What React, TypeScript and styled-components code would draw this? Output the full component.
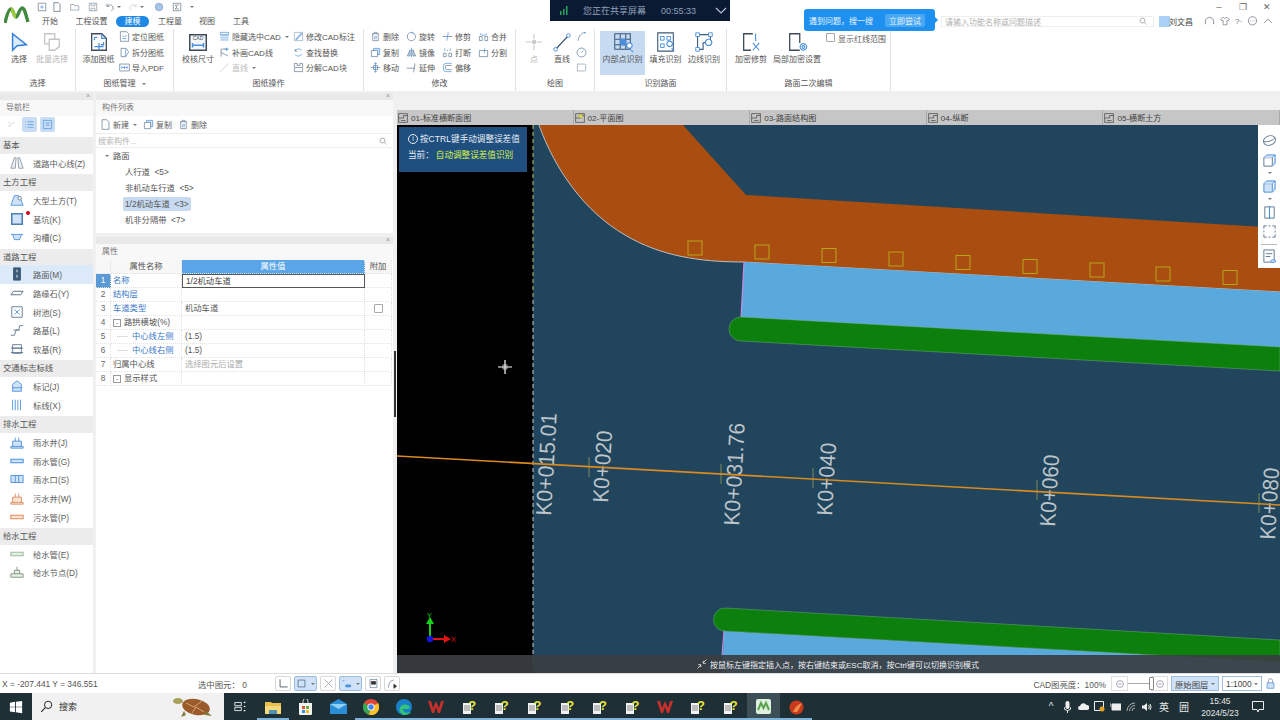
import React from "react";
import styled, { createGlobalStyle } from "styled-components";

const Global = createGlobalStyle`
  html, body { margin: 0; padding: 0; background: #fff; overflow: hidden; }
  * { box-sizing: border-box; }
  #root { width: 1280px; height: 720px; }
`;

const FONT = `"Liberation Sans", "Noto Sans CJK SC", sans-serif`;

/* ---------- icon drawings ---------- */
const D = "#5d7690";
const B = "#4a8fdc";
const L = "#cfe2f7";

const P = ({ d, c = D, w = 1, f = "none" }: { d: string; c?: string; w?: number; f?: string }) => (
  <path d={d} stroke={c} strokeWidth={w} fill={f} />
);

const icons: Record<string, React.ReactNode> = {
  cursor: <P d="M5 3v18l5-5 10-1z" c="#2f7fd6" w={1.6} f="#dcebfb" />,
  batch: <><P d="M4 3h11v11H4z" c="#c4c4c4" w={1.4} /><P d="M9 9h11v8l-5 4H9z" c="#c4c4c4" w={1.4} f="#fff" /></>,
  addDraw: <><P d="M4 3h11l5 5v13H4z" c="#3c4a5a" w={1.4} f="#fff" /><P d="M15 3v5h5M7 7h3M7 7v3M17 12v3h-3M7 17h10M12 13v8" c={B} w={1.4} /></>,
  check: <><P d="M3 4h18v17H3z" c="#3c4a5a" w={1.6} f="#f4f7fb" /><P d="M6 13v5M18 13v5M6 15.5h12" c={B} w={1.6} /><text x="12" y="10" fontSize="5.5" textAnchor="middle" fill="#3c4a5a" fontFamily="Liberation Sans">CAD</text></>,
  inner: <><P d="M3 3h17v17H3zM3 9h17M3 15h17M9 3v17M15 3v17" c="#3c5a78" w={1.1} /><P d="M9 9h6v6H9z" c={B} f={B} /><P d="M19 19a3 3 0 1 0-.01 0M21 21l2 2" c={B} w={1.3} f="#fff" /></>,
  fill: <><P d="M3 2h17v20H3z" c="#3c5a78" w={1.2} /><P d="M6 6h4v4H6zM6 14h4v4H6zM13 6h4v4h-4z" c={B} /><P d="M16 17a3 3 0 1 0-.01 0M18 19l3 3" c={B} w={1.3} f="#fff" /></>,
  edge: <><P d="M5 4h14v7l-8 2v7H5z" c="#3c5a78" w={1.2} /><P d="M3 2h4v4H3zM17 2h4v4h-4zM3 18h4v4H3z" c={B} f="#fff" /><P d="M17 16a3.5 3.5 0 1 0-.01 0" c={B} w={1.3} f="#fff" /></>,
  clip: <><P d="M14 3H4v18h8" c="#3c4a5a" w={1.4} /><P d="M17 3v8M14 13l7 8M21 13l-7 8" c={B} w={1.2} /></>,
  local: <><P d="M15 21H4V3h11v10" c="#3c4a5a" w={1.4} /><P d="M19 21a3.6 3.6 0 1 0-.01 0M19 19a1.5 1.5 0 1 0-.01 0" c={B} w={1.2} /></>,
  point: <><P d="M12 3v6M12 15v6M3 12h6M15 12h6" c="#c9c9c9" w={1.2} /><circle cx="12" cy="12" r="2.4" fill="#c9c9c9" /></>,
  line: <><P d="M5 20L19 5" c="#2e4a66" w={1.4} /><circle cx="5" cy="20" r="2" fill="#fff" stroke={B} /><circle cx="19" cy="5" r="2" fill="#fff" stroke={B} /></>,
  arc: <><P d="M3 14C4 7 8 3 13 2" /><circle cx="13" cy="2.6" r="1.2" fill={B} /></>,
  circ: <><circle cx="8" cy="8" r="6.5" stroke={D} fill="none" /><P d="M8 8l3-3" c={B} /></>,
  rectI: <P d="M2 3h11l1 1v8l-1 1H2z" c="#8b9aab" />,
  locate: <><P d="M2 1h9l3 3v11H2z" /><P d="M5 6l3 3 3-3M5 11h6" c={B} /></>,
  split: <><P d="M3 2h7l4 5-4 7H3z" /><P d="M10 2l-1 12" c={B} /></>,
  pdf: <><P d="M1 3h14v10H1z" /><P d="M4 6v4M8 6v4M12 6v4M4 8h8" c={B} /></>,
  hide: <P d="M2 2h12v3H2zM2 7h12M2 10h12M2 13h12" c={B} />,
  fix: <><P d="M3 3h10M3 3v11M3 8l10 5" /><P d="M11 1v5M8 3h6" c={B} /></>,
  slash: <P d="M2 14L14 2" c="#c0c0c0" />,
  edit: <><P d="M2 2h12v12H2z" c="#8fa8c2" /><P d="M4 12l8-9 1 1-8 9z" c={B} f={L} /></>,
  find: <><P d="M13 5A6 6 0 0 0 3 6M3 11a6 6 0 0 0 10-1" c={B} /><P d="M3 3v3h3" c={D} /></>,
  explode: <P d="M2 8V2h4v3h4V2h4v6H2zM2 9v5h12V9" />,
  del: <><P d="M3 4h10M6 4V2h4v2M4 4v10h8V4" /><P d="M7 7v5M9 7v5" c={B} /></>,
  copy: <><P d="M5 2h9v9H5z" c={B} f={L} /><P d="M2 5h9v9H2z" f="#fff" /></>,
  move: <><P d="M8 1v14M1 8h14M8 1L6 3M8 1l2 2M8 15l-2-2M8 15l2-2" c={B} /><P d="M5 5h6v6H5z" /></>,
  rotate: <><P d="M13 5a6 6 0 1 1-3-2.5" /><P d="M10 1v3h3" c={B} /></>,
  mirror: <><P d="M8 1v14" c={B} /><P d="M6 4L2 13h4zM10 4l4 9h-4z" f={L} /></>,
  extend: <P d="M1 9h8M13 2l-2 13M9 9h4" c={D} />,
  trim: <><P d="M1 8h14" /><P d="M9 2L7 14" c={B} /></>,
  brk: <><P d="M2 14V9h4v5zM10 14V9h4v5z" /><P d="M4 2v4M12 2v4M8 4v2" c={B} /></>,
  offset: <><P d="M14 2H6a4 4 0 0 0-4 4v4a4 4 0 0 0 4 4h8" c={B} /><P d="M14 5H7a2 2 0 0 0-2 2v2a2 2 0 0 0 2 2h7" /></>,
  merge: <><P d="M2 14V8h4v6zM10 14V8h4v6z" /><P d="M4 3v3M12 3v3M5 6h6" c={B} /></>,
  divide: <><P d="M2 5h12v9H2z" /><P d="M10 2l-1 7" c={B} /></>,
  newDoc: <P d="M3 1h7l3 3v11H3z" />,
  listI: <><P d="M5 4h9M5 8h9M5 12h9" c={B} /><P d="M2 4h1M2 8h1M2 12h1" c={B} /></>,
  formI: <><P d="M2 2h12v12H2z" c={B} /><P d="M5 6h6M5 9h6" c={B} /></>,
  treeI: <P d="M3 12l4-4M8 7l1-1M11 5h2M3 5h2" c="#888" />,
  road: <><P d="M5 2L1 14h5l1-12zM11 2l4 12h-5L9 2z" c="#8a97a5" f="#eef1f4" /></>,
  earth: <><P d="M1 14L5 3h5l2 4 3 7z" c={B} f={L} /><circle cx="11" cy="6" r="2" fill="#fff" stroke={D} /></>,
  pit: <P d="M2 2h12v12H2z" c="#4d7fb8" w={1.8} f={L} />,
  ditch: <P d="M1 5h14M3 5l2 6h6l2-6" c={B} f={L} />,
  pave: <><P d="M4 1h8v14H4z" c="#3c5a78" f="#3c5a78" /><P d="M8 3v3M8 9v3" c="#fff" /></>,
  curb: <P d="M4 6h11l-3 4H1z" c="#4b6580" f="#fff" />,
  tree: <><P d="M2 2h12v12H2z" /><P d="M5 5l6 6M11 5l-6 6" c={B} /></>,
  sub: <P d="M1 14h4l2-6h3l1-5h4M4 8h7" c={D} />,
  soft: <P d="M3 3h10v4H3zM1 7h14M3 7v6h10V7M1 12h14" />,
  mark: <><P d="M3 14V6l5-4 5 4v8z" c={B} f={L} /><P d="M3 10h10" c={B} /></>,
  stripe: <P d="M3 2v12M6 2v12M9 2v12M12 2v12" c={B} />,
  well: <P d="M1 13h14v2H1zM3 13V7h10v6M6 7V3M10 7V3" c={B} f={L} />,
  pipe: <P d="M1 6h14v4H1z" c={B} w={1.2} f={L} />,
  inlet: <P d="M1 4h14v8H1zM6 4v8M10 4v8" c={B} f={L} />,
  sWell: <P d="M1 13h14v2H1zM3 13V7h10v6M6 7V3M10 7V3" c="#d98a5e" f="#fbe3d4" />,
  sPipe: <P d="M1 6h14v4H1z" c="#d98a5e" w={1.2} f="#fbe3d4" />,
  wPipe: <P d="M1 6h14v4H1z" c="#9dbb9d" w={1.2} f="#e2efe2" />,
  wNode: <P d="M1 10h14v4H1zM5 10V6h6v4M8 6V2" c="#7d8f7d" f="#e2efe2" />,
  newQ: <P d="M3 1h7l3 3v11H3z" c="#456" />,
  openQ: <P d="M1 13V4h5l1 2h7v7z" c="#789" />,
  saveQ: <><P d="M2 2h12v12H2z" c="#789" /><P d="M5 2v4h6V2M5 14v-4h6v4" c="#789" /></>,
  addQ: <><P d="M2 2h12v12H2z" c="#567" /><P d="M8 5v6M5 8h6" c={B} /></>,
  undoQ: <P d="M3 3v4h4M3 7c3-4 10-3 10 3 0 2-1 3-3 4" c="#567" />,
  redoQ: <P d="M13 3v4H9M13 7C10 3 3 4 3 10c0 2 1 3 3 4" c="#c8c8c8" />,
  globeQ: <circle cx="8" cy="8" r="6" fill="#a9c5e8" stroke="#6d93c4" />,
  sigmaQ: <><P d="M2 2h12v12H2z" c="#567" /><P d="M11 5H5l3 3-3 3h6" c="#567" /></>,
  headset: <P d="M2 10V8a6 6 0 0 1 12 0v2M2 9v3M14 9v3" c="#667" />,
  shirt: <P d="M5 2L1 5l2 3 2-1v7h6V7l2 1 2-3-4-3-3 2z" c="#667" />,
  chat: <><circle cx="8" cy="7" r="6" stroke="#667" fill="none" /><P d="M5 7h1M8 7h1M11 7h1" c="#667" /></>,
  chevUp: <P d="M2 11l6-6 6 6" c="#667" w={1.2} />,
  sphere: <><ellipse cx="8" cy="8" rx="6.5" ry="5" stroke={D} fill="none" transform="rotate(-20 8 8)" /><P d="M2 9c3 1 8 0 12-4" /></>,
  cube: <><P d="M2 5h9v9H2z" /><P d="M2 5l3-3h9l-3 3M14 2v9l-3 3" c={B} f={L} /></>,
  cubeF: <><P d="M2 5h9v9H2z" c={B} f={L} /><P d="M2 5l3-3h9l-3 3M14 2v9l-3 3" c={B} f={L} /></>,
  clipV: <><P d="M3 2h10v12H3z" c={D} /><P d="M8 1v14" c={B} w={1.2} /></>,
  frame: <P d="M2 5V2h3M11 2h3v3M14 11v3h-3M5 14H2v-3M7 2h2M7 14h2M2 7v2M14 7v2" />,
  doc: <><P d="M2 1h11v13H2z" /><P d="M4 5h7M4 8h5" c={D} /><P d="M9 13c1-2 4-2 6 0-2 2-5 2-6 0z" c={B} f={L} /></>,
  axes: <P d="M3 2v11h11" c="#3c4a5a" w={1.2} />,
  boxI: <P d="M3 3h10v10H3z" c="#3c5a78" f={L} />,
  crossI: <P d="M2 2l12 12M14 2L2 14" c="#8895a5" />,
  dotI: <P d="M2 4h3M7 10h7v3H7z" c={B} f={B} />,
  docI: <><P d="M3 2h10v12H3z" /><P d="M5 5h6v4H5z" c="#333" f="#333" /></>,
  curveI: <><P d="M2 14c1-8 3-10 8-11" /><P d="M10 9l4 3-4 3z" c="#333" f="#333" /></>,
  minusI: <><circle cx="8" cy="8" r="5.5" stroke="#778" fill="none" /><P d="M5 8h6" c="#778" /></>,
  lock: <><P d="M3 7h10v8H3z" c={B} f={L} /><P d="M5 7V4a3 3 0 0 1 6 0v3" c="#778" /></>,
  sheet: <><P d="M1 1h14v14H1z" c="#333" /><P d="M1 8h8V4h6M5 12h7" c="#333" /></>,
  sheetY: <><P d="M1 1h14v14H1z" c="#333" /><P d="M1 8h8V4h6" c="#333" /><circle cx="9" cy="5" r="3" fill="#e8de5a" stroke="#a09a20" /></>,
  win: <P d="M1 3l6-1v5.6H1zM8 2l7-1v6.6H8zM1 8.4h6V14l-6-1zM8 8.4h7V15l-7-1z" c="none" f="#fff" />,
  mag: <><circle cx="10" cy="6" r="4.5" stroke="#222" fill="none" strokeWidth="1.2" /><P d="M6.5 9.5L1.5 14.5" c="#222" w={1.3} /></>,
  task: <><P d="M1 3h8v4H1zM1 9h8v4H1z" c="#fff" /><P d="M12 3h2M12 8h2M12 13h2" c="#fff" w={1.4} /></>,
};

const Svg = styled.svg<{ $s: number }>`
  width: ${(p) => p.$s}px;
  height: ${(p) => p.$s}px;
  flex: none;
  display: block;
`;

const Icon = ({ n, s = 12, box = 16 }: { n: string; s?: number; box?: number }) => (
  <Svg $s={s} viewBox={`0 0 ${box} ${box}`}>{icons[n]}</Svg>
);

/* ---------- shell ---------- */
const Root = styled.div`
  width: 1280px;
  height: 720px;
  position: relative;
  overflow: hidden;
  background: #fff;
  font-family: ${FONT};
  font-size: 8px;
  color: #5c5c5c;
  display: flex;
  flex-direction: column;
`;

const TitleRow = styled.div`
  height: 13px;
  display: flex;
  align-items: center;
  padding-left: 36px;
  flex: none;
`;
const QatItem = styled.span<{ $w: number }>`
  width: ${(p) => p.$w}px;
  display: flex;
  justify-content: center;
  align-items: center;
`;
const Caret = styled.span`
  width: 0;
  height: 0;
  border-left: 2px solid transparent;
  border-right: 2px solid transparent;
  border-top: 2.5px solid #777;
  margin-left: 2px;
  flex: none;
`;
const WinBtns = styled.div`
  margin-left: auto;
  display: flex;
  padding-right: 1px;
  color: #666;
  font-size: 9px;
`;
const WinBtn = styled.span`
  width: 24px;
  text-align: center;
  line-height: 12px;
`;

const LogoWrap = styled.div`
  position: absolute;
  left: 4px;
  top: 4px;
`;

const TabRow = styled.div`
  height: 16px;
  display: flex;
  align-items: center;
  padding-left: 33px;
  flex: none;
`;
const MenuTab = styled.span<{ $w: number; $on?: boolean }>`
  width: ${(p) => p.$w}px;
  height: 11px;
  line-height: 11px;
  text-align: center;
  font-size: 8px;
  color: ${(p) => (p.$on ? "#fff" : "#555")};
  background: ${(p) => (p.$on ? "#1e88e5" : "transparent")};
  border-radius: 6px;
`;
const SearchBox = styled.div`
  margin-left: 682px;
  width: 213px;
  height: 11px;
  border: 1px solid #eeeeee;
  display: flex;
  align-items: center;
  justify-content: space-between;
  padding: 0 6px 0 3px;
  color: #b0b0b0;
  font-size: 8px;
`;
const UserBlock = styled.div`
  display: flex;
  align-items: center;
  margin-left: 5px;
  color: #444;
`;
const Avatar = styled.span`
  width: 11px;
  height: 11px;
  background: #a9d0f5;
  margin-right: -1px;
`;
const HelpTools = styled.div`
  display: flex;
  align-items: center;
  gap: 5px;
  margin-left: 11px;
  color: #667;
`;

const Ribbon = styled.div`
  height: 62px;
  display: flex;
  flex: none;
  background: #fff;
`;
const Group = styled.div<{ $w: number }>`
  width: ${(p) => p.$w}px;
  flex: none;
  display: flex;
  flex-direction: column;
  border-right: 1px solid #e2e2e2;
  height: 62px;
`;
const GroupBody = styled.div<{ $pl?: number }>`
  height: 49px;
  display: flex;
  padding-left: ${(p) => p.$pl ?? 0}px;
`;
const GroupLabel = styled.div`
  height: 14px;
  line-height: 14px;
  text-align: center;
  font-size: 8px;
  color: #555;
  display: flex;
  align-items: center;
  justify-content: center;
  gap: 4px;
`;
const BigBtn = styled.div<{ $w: number; $on?: boolean; $off?: boolean }>`
  width: ${(p) => p.$w}px;
  height: 44px;
  margin-top: 2px;
  flex: none;
  display: flex;
  flex-direction: column;
  align-items: center;
  background: ${(p) => (p.$on ? "#c6daf2" : "transparent")};
  color: ${(p) => (p.$off ? "#b8b8b8" : "#555")};
  white-space: nowrap;
`;
const BigLabel = styled.span`
  margin-top: 2px;
  line-height: 10px;
`;
const SmallCol = styled.div<{ $w: number }>`
  width: ${(p) => p.$w}px;
  flex: none;
  display: flex;
  flex-direction: column;
`;
const SmallBtn = styled.div<{ $off?: boolean }>`
  height: 15.5px;
  display: flex;
  align-items: center;
  gap: 2px;
  white-space: nowrap;
  color: ${(p) => (p.$off ? "#bbb" : "#555")};
`;
const CheckRow = styled.label`
  display: flex;
  align-items: flex-start;
  gap: 3px;
  margin-left: 5px;
  margin-top: 4px;
  white-space: nowrap;
`;
const Check = styled.span`
  width: 9px;
  height: 9px;
  border: 1px solid #a8a8a8;
  border-radius: 1px;
  background: #fff;
  flex: none;
  display: block;
`;

const Body = styled.div`
  height: 582px;
  flex: none;
  display: flex;
  background: #f0f0f0;
  padding-top: 2px;
`;

const Panel = styled.section`
  background: #fff;
  display: flex;
  flex-direction: column;
`;
const NavPanel = styled(Panel)`
  width: 93px;
  flex: none;
  margin-right: 3px;
`;
const Column = styled.div`
  width: 297px;
  flex: none;
  display: flex;
  flex-direction: column;
  gap: 4px;
`;
const Band = styled.div`
  height: 7px;
  background: #e9e9e9;
  color: #999;
  font-size: 7px;
  line-height: 6px;
  text-align: right;
  padding-right: 3px;
  flex: none;
`;
const PanelTitle = styled.div`
  height: 16px;
  line-height: 15px;
  background: #f8f8f8;
  padding-left: 6px;
  color: #777;
  flex: none;
`;
const NavTools = styled.div`
  height: 21px;
  display: flex;
  align-items: center;
  gap: 3px;
  padding: 0 0 4px 4px;
  flex: none;
`;
const ToggleBtn = styled.span<{ $on?: boolean }>`
  width: 15px;
  height: 15px;
  background: ${(p) => (p.$on ? "#c9def5" : "transparent")};
  border-radius: 2px;
  display: flex;
  align-items: center;
  justify-content: center;
`;
const NavHead = styled.div`
  height: 16.5px;
  line-height: 16px;
  background: #ececec;
  padding-left: 3px;
  font-size: 8.4px;
  color: #555;
`;
const NavList = styled.div`
  margin-bottom: 2px;
`;
const NavRow = styled.div<{ $on?: boolean }>`
  height: 18.67px;
  display: flex;
  align-items: center;
  gap: 9px;
  padding-left: 10px;
  background: ${(p) => (p.$on ? "#dbe9f8" : "transparent")};
  font-size: 8.3px;
  white-space: nowrap;
  position: relative;
`;
const RedDot = styled.span`
  position: absolute;
  left: 26px;
  top: 2px;
  width: 4px;
  height: 4px;
  border-radius: 50%;
  background: #d00018;
`;

const CompPanel = styled(Panel)`
  height: 140px;
  flex: none;
`;
const CompTools = styled.div`
  height: 17px;
  display: flex;
  align-items: center;
  padding-left: 4px;
  gap: 2px;
  flex: none;
`;
const ToolGap = styled.span`
  width: 2px;
`;
const SearchRow = styled.div`
  height: 15px;
  border-top: 1px solid #eee;
  border-bottom: 1px solid #eee;
  color: #b5b5b5;
  display: flex;
  justify-content: space-between;
  align-items: center;
  padding: 0 6px 0 2px;
  flex: none;
`;
const TreeRow = styled.div<{ $lv: number }>`
  height: 16px;
  display: flex;
  align-items: center;
  padding-left: ${(p) => (p.$lv ? 29 : 9)}px;
  font-size: 8.3px;
  color: #555;
`;
const TreeText = styled.span<{ $on?: boolean }>`
  background: ${(p) => (p.$on ? "#c7daf0" : "transparent")};
  border-radius: 2px;
  padding: 0 ${(p) => (p.$on ? "2px" : "0")};
  margin-left: ${(p) => (p.$on ? "-2px" : "0")};
  line-height: 14px;
  white-space: nowrap;
`;
const TreeCaret = styled(Caret)`
  margin: 0 4px 0 0;
`;
const PropPanel = styled(Panel)`
  flex: 1;
`;
const Table = styled.div`
  display: grid;
  grid-template-columns: 15px 71px 183px 27px;
  grid-auto-rows: 14px;
  flex: none;
  font-size: 8.3px;
  line-height: 13px;
`;
const Cell = styled.div<{ $head?: boolean; $active?: boolean; $c?: string; $num?: boolean; $pl?: number }>`
  border-right: 1px dotted #e2e2e2;
  border-bottom: 1px dotted #e2e2e2;
  padding-left: ${(p) => p.$pl ?? 3}px;
  white-space: nowrap;
  text-align: ${(p) => (p.$head || p.$num ? "center" : "left")};
  color: ${(p) => p.$c ?? "#555"};
  background: ${(p) => (p.$active ? "#5b9bd5" : p.$head ? "#f7f7f7" : "#fff")};
  display: flex;
  align-items: center;
  justify-content: ${(p) => (p.$head || p.$num ? "center" : "flex-start")};
  gap: 3px;
  ${(p) => (p.$head || p.$num ? "padding-left: 0;" : "")}
`;
const HeadValue = styled(Cell)`
  background: #5aa5e8;
  color: #fff;
`;
const EditCell = styled(Cell)`
  border: 1px solid #555;
  color: #444;
`;
const Expand = styled.span`
  width: 8px;
  height: 8px;
  border: 1px solid #999;
  font-size: 7px;
  line-height: 5px;
  text-align: center;
  color: #666;
  flex: none;
`;
const Branch = styled.span`
  width: 11px;
  border-top: 1px solid #ddd;
  margin-right: 1px;
  flex: none;
`;
const CheckCell = styled(Cell)`
  justify-content: center;
  padding-left: 0;
`;

const Splitter = styled.div`
  width: 4px;
  flex: none;
  position: relative;
`;
const SplitThumb = styled.span`
  position: absolute;
  left: 1px;
  top: 258px;
  width: 2px;
  height: 66px;
  background: #333;
`;

const Work = styled.div`
  flex: 1;
  display: flex;
  flex-direction: column;
  min-width: 0;
`;
const Strip = styled.div`
  height: 17px;
  flex: none;
`;
const SheetTabs = styled.div`
  height: 15px;
  background: #c6c6c6;
  display: flex;
  flex: none;
`;
const SheetTab = styled.div`
  flex: 1;
  display: flex;
  align-items: center;
  gap: 3px;
  padding-left: 1px;
  color: #444;
  font-size: 8.1px;
  border-right: 1px solid #aaa;
`;
const Canvas = styled.div`
  flex: 1;
  position: relative;
  background: #000;
  overflow: hidden;
`;
const CadSvg = styled.svg`
  display: block;
  width: 883px;
  height: 548px;
`;
const InfoCard = styled.div`
  position: absolute;
  left: 2px;
  top: 2px;
  width: 128px;
  height: 45px;
  background: #1f4f7f;
  color: #e8eef5;
  padding: 7px 0 0 9px;
  font-size: 8.6px;
  display: flex;
  flex-direction: column;
  gap: 6px;
`;
const InfoLine = styled.div`
  display: flex;
  align-items: center;
  gap: 2px;
  white-space: nowrap;
  line-height: 10px;
`;
const InfoMark = styled.span`
  width: 10px;
  height: 10px;
  border: 1px solid #e8eef5;
  border-radius: 50%;
  font-size: 7px;
  line-height: 8px;
  text-align: center;
  flex: none;
`;
const InfoHot = styled.span`
  color: #d7f24a;
`;
const HintBar = styled.div`
  position: absolute;
  left: 0;
  right: 0;
  bottom: 0;
  height: 18px;
  background: rgba(58, 62, 66, 0.92);
  color: #eef1f4;
  font-size: 8px;
  display: flex;
  align-items: center;
  padding-left: 300px;
  gap: 3px;
  white-space: nowrap;
`;
const ViewTools = styled.div`
  position: absolute;
  right: 0;
  top: 0;
  width: 22px;
  height: 143px;
  background: #fff;
  display: flex;
  flex-direction: column;
  align-items: center;
  padding-top: 8px;
  gap: 4.5px;
`;
const ViewSep = styled.span`
  width: 16px;
  border-top: 1px solid #bbb;
`;

const StatusBar = styled.div`
  height: 20px;
  flex: none;
  display: flex;
  align-items: center;
  background: #fff;
  border-top: 1px solid #ddd;
  padding-left: 2px;
  color: #555;
  font-size: 8.4px;
  white-space: nowrap;
`;
const Coord = styled.span`
  width: 196px;
`;
const Selected = styled.span`
  width: 77px;
`;
const StatusBtn = styled.span<{ $w?: number; $on?: boolean }>`
  width: ${(p) => p.$w ?? 16}px;
  height: 15px;
  border: 1px solid ${(p) => (p.$on ? "#9dbde0" : "#d8d8d8")};
  background: ${(p) => (p.$on ? "#cfe2f7" : "#fff")};
  border-radius: 2px;
  margin-right: 3px;
  display: flex;
  align-items: center;
  justify-content: center;
  gap: 2px;
  flex: none;
`;
const StatusRight = styled.div`
  margin-left: auto;
  display: flex;
  align-items: center;
  padding-right: 4px;
`;
const Bright = styled.span`
  margin-right: 5px;
`;
const SliderTrack = styled.span`
  width: 26px;
  height: 1px;
  background: #aaa;
  margin: 0 -3px 0 -3px;
  position: relative;
`;
const SliderKnob = styled.span`
  position: absolute;
  right: 0;
  top: -6px;
  width: 5px;
  height: 13px;
  border: 1px solid #888;
  background: #fff;
  border-radius: 1px;
`;
const ZoomBtn = styled.span`
  width: 17px;
  height: 15px;
  border: 1px solid #ddd;
  display: flex;
  align-items: center;
  justify-content: center;
  margin-right: 3px;
  flex: none;
`;
const Select = styled.span<{ $w: number; $on?: boolean }>`
  width: ${(p) => p.$w}px;
  height: 15px;
  border: 1px solid #9dbde0;
  background: ${(p) => (p.$on ? "#cfe2f7" : "#fff")};
  display: flex;
  align-items: center;
  justify-content: space-between;
  padding: 0 3px;
  margin-right: 3px;
  color: #444;
  flex: none;
`;

const Taskbar = styled.div`
  height: 27px;
  flex: none;
  background: #1e3036;
  display: flex;
  align-items: stretch;
  color: #fff;
`;
const StartBtn = styled.div`
  width: 32px;
  display: flex;
  align-items: center;
  justify-content: center;
  flex: none;
`;
const TaskSearch = styled.div`
  width: 192px;
  background: #f1f1f1;
  color: #333;
  display: flex;
  align-items: center;
  padding-left: 8px;
  gap: 6px;
  position: relative;
  flex: none;
  font-size: 9px;
`;
const Turtle = styled.svg`
  position: absolute;
  right: 6px;
  top: 2px;
  width: 46px;
  height: 24px;
`;
const TaskItem = styled.div<{ $run?: boolean; $on?: boolean }>`
  width: 32.7px;
  flex: none;
  display: flex;
  align-items: center;
  justify-content: center;
  background: ${(p) => (p.$on ? "#3c4f56" : "transparent")};
  border-bottom: 2px solid ${(p) => (p.$run ? "#7fb3d9" : "transparent")};
  border-top: 2px solid transparent;
`;
const Tray = styled.div`
  margin-left: auto;
  display: flex;
  align-items: center;
  color: #e8e8e8;
  font-size: 10px;
  padding-right: 10px;
`;
const TrayItem = styled.span<{ $w: number }>`
  width: ${(p) => p.$w}px;
  display: flex;
  justify-content: center;
  align-items: center;
`;
const Clock = styled.div`
  width: 52px;
  text-align: center;
  font-size: 8.4px;
  line-height: 12px;
  white-space: nowrap;
`;
const HelpBadge = styled.span`
  position: relative;
  width: 15px;
  height: 18px;
  display: block;
`;
const HelpPage = styled.svg`
  position: absolute;
  left: 1px;
  top: 5px;
  width: 8px;
  height: 11px;
`;
const HelpMark = styled.span`
  position: absolute;
  right: 0;
  top: 0;
  width: 9px;
  line-height: 15px;
  font-size: 13px;
  font-weight: 700;
  color: #e6e63a;
  text-align: center;
`;

const ShareBar = styled.div`
  position: absolute;
  left: 550px;
  top: 0;
  width: 180px;
  height: 21px;
  background: #0b1a33;
  color: #8fa1ba;
  font-size: 9px;
  display: flex;
  align-items: center;
  padding-left: 9px;
  white-space: nowrap;
`;
const ShareText = styled.span`
  margin-left: 15px;
  width: 78px;
`;
const ShareTime = styled.span`
  width: 54px;
`;
const Bubble = styled.div`
  position: absolute;
  left: 804px;
  top: 9px;
  width: 131px;
  height: 22px;
  background: #1e90f0;
  border-radius: 3px;
  color: #eaf5ff;
  display: flex;
  align-items: center;
  padding-left: 5px;
  font-size: 8px;
  white-space: nowrap;
  &::after {
    content: "";
    position: absolute;
    right: -3px;
    top: 8px;
    border-left: 3px solid #1e90f0;
    border-top: 3px solid transparent;
    border-bottom: 3px solid transparent;
  }
`;
const BubbleCta = styled.span`
  margin-left: 12px;
  padding: 1px 4px;
  background: #4aa8f3;
  border-radius: 2px;
`;

/* ---------- taskbar pictures ---------- */
const Folder = () => (
  <svg width="16" height="14" viewBox="0 0 16 14">
    <path d="M0 2h6l1 1h9v11H0z" fill="#e9c04e" />
    <path d="M0 6h16v8H0z" fill="#f6d978" />
    <path d="M4 10h8v4H4z" fill="#4f93b8" />
  </svg>
);
const Store = () => (
  <svg width="15" height="16" viewBox="0 0 15 16">
    <path d="M1 4h13v11a1 1 0 0 1-1 1H2a1 1 0 0 1-1-1z" fill="#f4f4f4" />
    <path d="M5 4V2a2 2 0 0 1 5 0v2" stroke="#cfcfcf" fill="none" />
    <path d="M4 7h3v3H4z" fill="#e2572a" /><path d="M8 7h3v3H8z" fill="#6cb33f" />
    <path d="M4 11h3v3H4z" fill="#2b8fdb" /><path d="M8 11h3v3H8z" fill="#f5b920" />
  </svg>
);
const Mail = () => (
  <svg width="17" height="15" viewBox="0 0 17 15">
    <path d="M0 5L8.5 0 17 5v10H0z" fill="#2a8fd8" />
    <path d="M0 5l8.5 5L17 5" fill="#8fd0f5" />
  </svg>
);
const Chrome = () => (
  <svg width="16" height="16" viewBox="0 0 16 16">
    <circle cx="8" cy="8" r="8" fill="#e04437" />
    <path d="M8 8L1 4a8 8 0 0 0 5 11.8z" fill="#35a752" />
    <path d="M8 8l-2 7.8A8 8 0 0 0 15 4z" fill="#f9c22b" />
    <circle cx="8" cy="8" r="3.6" fill="#fff" />
    <circle cx="8" cy="8" r="2.7" fill="#4285f4" />
  </svg>
);
const Edge = () => (
  <svg width="16" height="16" viewBox="0 0 16 16">
    <circle cx="8" cy="8" r="8" fill="#1680c9" />
    <path d="M8 16c-4-1-6-6-3-9 2-2 6-2 8 0 1 1 1 3-1 3H7c0 3 3 5 8 3-1 2-4 3-7 3z" fill="#35c27a" />
  </svg>
);
const Wps = () => (
  <svg width="16" height="14" viewBox="0 0 16 14">
    <path d="M0 1l3 0 2 7 3-7 3 7 2-7 3 0-4 12h-2L8 7l-2 6H4z" fill="#c9302c" />
  </svg>
);
const Help = () => (
  <HelpBadge>
    <HelpPage viewBox="0 0 8 11">
      <path d="M0 0h8v11H0z" fill="#f2f2f2" />
      <path d="M1 3h6M1 5h6M1 7h6" stroke="#888" />
    </HelpPage>
    <HelpMark>?</HelpMark>
  </HelpBadge>
);
const AppM = () => (
  <svg width="15" height="15" viewBox="0 0 15 15">
    <rect width="15" height="15" rx="2" fill="#dff0df" />
    <path d="M2 11l3-7 2.5 5L10 4l3 7" stroke="#5ba24c" strokeWidth="2" fill="none" />
  </svg>
);
const Fire = () => (
  <svg width="15" height="16" viewBox="0 0 15 16">
    <circle cx="7.5" cy="8.5" r="7" fill="#c93a1c" />
    <path d="M4 13c2-5 5-8 9-9-2 3-3 7-5 9z" fill="#f08a4b" />
  </svg>
);

/* ---------- data ---------- */
type Nav = { head: string; rows: [string, string, boolean?][] };
const nav: Nav[] = [
  { head: "基本", rows: [["road", "道路中心线(Z)"]] },
  { head: "土方工程", rows: [["earth", "大型土方(T)"], ["pit", "基坑(K)"], ["ditch", "沟槽(C)"]] },
  { head: "道路工程", rows: [["pave", "路面(M)", true], ["curb", "路缘石(Y)"], ["tree", "树池(S)"], ["sub", "路基(L)"], ["soft", "软基(R)"]] },
  { head: "交通标志标线", rows: [["mark", "标记(J)"], ["stripe", "标线(X)"]] },
  { head: "排水工程", rows: [["well", "雨水井(J)"], ["pipe", "雨水管(G)"], ["inlet", "雨水口(S)"], ["sWell", "污水井(W)"], ["sPipe", "污水管(P)"]] },
  { head: "给水工程", rows: [["wPipe", "给水管(E)"], ["wNode", "给水节点(D)"]] },
];

const LINK = "#3a78c8";
const rows = [
  { n: "1", name: "名称", c: LINK, v: "1/2机动车道" },
  { n: "2", name: "结构层", c: LINK, v: "" },
  { n: "3", name: "车道类型", c: LINK, v: "机动车道", check: true },
  { n: "4", name: "路拱横坡(%)", expand: true, v: "" },
  { n: "5", name: "中心线左侧", c: LINK, child: true, v: "(1.5)" },
  { n: "6", name: "中心线右侧", c: LINK, child: true, v: "(1.5)" },
  { n: "7", name: "归属中心线", v: "选择图元后设置", muted: true },
  { n: "8", name: "显示样式", expand: true, v: "" },
];

const squares = [[695, 248], [762, 252], [829, 255.5], [896, 259], [963, 262.5], [1030, 266.5], [1097, 270], [1163, 274], [1230, 277.5]];
const stations = [
  { t: "K0+015.01", x: 551, y: 516, len: 103 },
  { t: "K0+020", x: 608, y: 503, len: 72 },
  { t: "K0+031.76", x: 739, y: 526, len: 103 },
  { t: "K0+040", x: 832, y: 516, len: 73 },
  { t: "K0+060", x: 1055, y: 527, len: 72 },
  { t: "K0+080", x: 1275, y: 540, len: 72 },
];
const ticks = [[589, 457], [721, 464], [813, 468], [1037, 480], [1259, 493]];

const taskApps: [React.ReactNode, boolean?, boolean?][] = [
  [<Icon n="task" s={13} />],
  [<Folder />, true],
  [<Store />],
  [<Mail />],
  [<Chrome />, true],
  [<Edge />, true],
  [<Wps />, true],
  [<Help />, true],
  [<Help />, true],
  [<Help />, true],
  [<Help />, true],
  [<Help />, true],
  [<Help />, true],
  [<Wps />, true],
  [<Help />, true],
  [<Help />, true],
  [<AppM />, true, true],
  [<Fire />, true],
];

const Big = ({ n, label, w, on, off, s = 22 }: { n: string; label: string; w: number; on?: boolean; off?: boolean; s?: number }) => (
  <BigBtn $w={w} $on={on} $off={off}>
    <Icon n={n} s={s} box={24} />
    <BigLabel>{label}</BigLabel>
  </BigBtn>
);
const Small = ({ n, label, off, caret }: { n: string; label?: string; off?: boolean; caret?: boolean }) => (
  <SmallBtn $off={off}>
    <Icon n={n} s={11} />
    {label && <span>{label}</span>}
    {caret && <Caret />}
  </SmallBtn>
);

export default function App() {
  return (
    <Root>
      <Global />
      <TitleRow>
        {["addQ", "newQ", "openQ", "saveQ"].map((n) => (
          <QatItem key={n} $w={n === "addQ" ? 12 : 18}><Icon n={n} s={10} /></QatItem>
        ))}
        <QatItem $w={22}><Icon n="undoQ" s={10} /><Caret /></QatItem>
        <QatItem $w={24}><Icon n="redoQ" s={10} /><Caret /></QatItem>
        <QatItem $w={22}><Icon n="globeQ" s={10} /></QatItem>
        <QatItem $w={14}><Icon n="sigmaQ" s={10} /></QatItem>
        <QatItem $w={14}><Caret /></QatItem>
        <WinBtns>
          <WinBtn>–</WinBtn>
          <WinBtn>❐</WinBtn>
          <WinBtn>✕</WinBtn>
        </WinBtns>
      </TitleRow>
      <LogoWrap>
        <svg width="26" height="22" viewBox="0 0 26 22">
          <path d="M1 19C3 10 5 5 7 5c2 0 3 8 5 8s3-8 6-9c3 0 4 8 6 14" stroke="#3f8a3e" strokeWidth="3.4" fill="none" />
          <path d="M7 5c2 0 3 8 5 8" stroke="#9fc93c" strokeWidth="3.4" fill="none" />
        </svg>
      </LogoWrap>
      <TabRow>
        <MenuTab $w={34}>开始</MenuTab>
        <MenuTab $w={49}>工程设置</MenuTab>
        <MenuTab $w={33} $on>建模</MenuTab>
        <MenuTab $w={42}>工程量</MenuTab>
        <MenuTab $w={32}>视图</MenuTab>
        <MenuTab $w={36}>工具</MenuTab>
        <SearchBox>
          <span>请输入功能名称或问题描述</span>
          <svg width="8" height="8" viewBox="0 0 16 16"><circle cx="7" cy="7" r="5" stroke="#999" strokeWidth="1.6" fill="none" /><path d="M11 11l4 4" stroke="#999" strokeWidth="1.6" /></svg>
        </SearchBox>
        <UserBlock><Avatar /><span>刘文昌</span></UserBlock>
        <HelpTools>
          <Icon n="headset" s={11} />
          <Icon n="shirt" s={10} />
          <span>?·</span>
          <Icon n="chat" s={11} />
          <Icon n="chevUp" s={10} />
        </HelpTools>
      </TabRow>
      <Ribbon>
        <Group $w={76}>
          <GroupBody $pl={3}>
            <Big n="cursor" label="选择" w={32} />
            <Big n="batch" label="批量选择" w={34} off />
          </GroupBody>
          <GroupLabel>选择</GroupLabel>
        </Group>
        <Group $w={98}>
          <GroupBody $pl={2}>
            <Big n="addDraw" label="添加图纸" w={41} />
            <SmallCol $w={50}>
              <Small n="locate" label="定位图纸" />
              <Small n="split" label="拆分图纸" />
              <Small n="pdf" label="导入PDF" />
            </SmallCol>
          </GroupBody>
          <GroupLabel>图纸管理 <Caret /></GroupLabel>
        </Group>
        <Group $w={190}>
          <GroupBody $pl={3}>
            <Big n="check" label="校核尺寸" w={42} />
            <SmallCol $w={74}>
              <Small n="hide" label="隐藏选中CAD" caret />
              <Small n="fix" label="补画CAD线" />
              <Small n="slash" label="直线" off caret />
            </SmallCol>
            <SmallCol $w={65}>
              <Small n="edit" label="修改CAD标注" />
              <Small n="find" label="查找替换" />
              <Small n="explode" label="分解CAD块" />
            </SmallCol>
          </GroupBody>
          <GroupLabel>图纸操作</GroupLabel>
        </Group>
        <Group $w={152}>
          <GroupBody $pl={6}>
            <SmallCol $w={36}>
              <Small n="del" label="删除" />
              <Small n="copy" label="复制" />
              <Small n="move" label="移动" />
            </SmallCol>
            <SmallCol $w={36}>
              <Small n="rotate" label="旋转" />
              <Small n="mirror" label="镜像" />
              <Small n="extend" label="延伸" />
            </SmallCol>
            <SmallCol $w={36}>
              <Small n="trim" label="修剪" />
              <Small n="brk" label="打断" />
              <Small n="offset" label="偏移" />
            </SmallCol>
            <SmallCol $w={36}>
              <Small n="merge" label="合并" />
              <Small n="divide" label="分割" />
            </SmallCol>
          </GroupBody>
          <GroupLabel>修改</GroupLabel>
        </Group>
        <Group $w={79}>
          <GroupBody $pl={4}>
            <Big n="point" label="点" w={28} off />
            <Big n="line" label="直线" w={28} />
            <SmallCol $w={14}>
              <Small n="arc" />
              <Small n="circ" />
              <Small n="rectI" />
            </SmallCol>
          </GroupBody>
          <GroupLabel>绘图</GroupLabel>
        </Group>
        <Group $w={132}>
          <GroupBody $pl={5}>
            <Big n="inner" label="内部点识别" w={45} on />
            <Big n="fill" label="填充识别" w={41} />
            <Big n="edge" label="边线识别" w={36} />
          </GroupBody>
          <GroupLabel>识别路面</GroupLabel>
        </Group>
        <Group $w={164}>
          <GroupBody $pl={2}>
            <Big n="clip" label="加密修剪" w={44} />
            <Big n="local" label="局部加密设置" w={48} />
            <CheckRow><Check /><span>显示红线范围</span></CheckRow>
          </GroupBody>
          <GroupLabel>路面二次编辑</GroupLabel>
        </Group>
      </Ribbon>

      <Body>
        <NavPanel>
          <Band>×</Band>
          <PanelTitle>导航栏</PanelTitle>
          <NavTools>
            <ToggleBtn><Icon n="treeI" s={9} /></ToggleBtn>
            <ToggleBtn $on><Icon n="listI" s={11} /></ToggleBtn>
            <ToggleBtn $on><Icon n="formI" s={11} /></ToggleBtn>
          </NavTools>
          {nav.map((g) => (
            <NavList key={g.head}>
              <NavHead>{g.head}</NavHead>
              {g.rows.map(([ic, label, on]) => (
                <NavRow key={label} $on={on}>
                  <Icon n={ic} s={14} />
                  <span>{label}</span>
                  {label === "基坑(K)" && <RedDot />}
                </NavRow>
              ))}
            </NavList>
          ))}
        </NavPanel>

        <Column>
          <CompPanel>
            <Band>×</Band>
            <PanelTitle>构件列表</PanelTitle>
            <CompTools>
              <Icon n="newDoc" s={11} /><span>新建</span><Caret /><ToolGap />
              <Icon n="copy" s={11} /><span>复制</span><ToolGap />
              <Icon n="del" s={11} /><span>删除</span>
            </CompTools>
            <SearchRow>
              <span>搜索构件...</span>
              <svg width="8" height="8" viewBox="0 0 16 16"><circle cx="7" cy="7" r="5" stroke="#999" strokeWidth="1.6" fill="none" /><path d="M11 11l4 4" stroke="#999" strokeWidth="1.6" /></svg>
            </SearchRow>
            <TreeRow $lv={0}><TreeCaret /><TreeText>路面</TreeText></TreeRow>
            <TreeRow $lv={1}><TreeText>人行道&nbsp; &lt;5&gt;</TreeText></TreeRow>
            <TreeRow $lv={1}><TreeText>非机动车行道&nbsp; &lt;5&gt;</TreeText></TreeRow>
            <TreeRow $lv={1}><TreeText $on>1/2机动车道&nbsp; &lt;3&gt;</TreeText></TreeRow>
            <TreeRow $lv={1}><TreeText>机非分隔带&nbsp; &lt;7&gt;</TreeText></TreeRow>
          </CompPanel>
          <PropPanel>
            <Band>×</Band>
            <PanelTitle>属性</PanelTitle>
            <Table>
              <Cell $head />
              <Cell $head>属性名称</Cell>
              <HeadValue $head>属性值</HeadValue>
              <Cell $head>附加</Cell>
              {rows.map((r, i) => (
                <React.Fragment key={r.n}>
                  <Cell $num $active={i === 0} $c={i === 0 ? "#fff" : "#666"}>{r.n}</Cell>
                  <Cell $c={r.c} $pl={r.child ? 6 : 2}>
                    {r.child && <Branch />}
                    {r.expand && <Expand>-</Expand>}
                    <span>{r.name}</span>
                  </Cell>
                  {i === 0 ? <EditCell>{r.v}</EditCell> : <Cell $c={r.muted ? "#aaa" : "#555"}>{r.v}</Cell>}
                  {r.check ? <CheckCell><Check /></CheckCell> : <Cell />}
                </React.Fragment>
              ))}
            </Table>
          </PropPanel>
        </Column>

        <Splitter><SplitThumb /></Splitter>

        <Work>
          <Strip />
          <SheetTabs>
            <SheetTab><Icon n="sheet" s={10} /><span>01-标准横断面图</span></SheetTab>
            <SheetTab><Icon n="sheetY" s={10} /><span>02-平面图</span></SheetTab>
            <SheetTab><Icon n="sheet" s={10} /><span>03-路面结构图</span></SheetTab>
            <SheetTab><Icon n="sheet" s={10} /><span>04-纵断</span></SheetTab>
            <SheetTab><Icon n="sheet" s={10} /><span>05-横断土方</span></SheetTab>
          </SheetTabs>
          <Canvas>
            <CadSvg viewBox="397 125 883 548">
              <rect x="533" y="125" width="747" height="548" fill="#21455c" />
              <path d="M746 195L1280 228V292L743 262C700 262 660 256 625 235C585 212 555 170 539 125H683z" fill="#a94d10" />
              <path d="M539 125C555 170 585 212 625 235C660 256 700 262 743 262L1280 292" fill="none" stroke="#b9bec4" strokeWidth="1" />
              <path d="M744 262L1280 292V350L741 318z" fill="#5aa9dd" />
              <path d="M744 262L741 318" stroke="#c58be0" strokeWidth="1.2" fill="none" />
              <path d="M741 317L1280 347V371L741 341A12 12 0 0 1 741 317z" fill="#0c7f0c" stroke="#6fae7a" strokeWidth=".5" />
              <path d="M724 631L1280 662V673H722z" fill="#5aa9dd" />
              <path d="M724 631L722 656" stroke="#c58be0" strokeWidth="1.2" fill="none" />
              <path d="M725 608L1280 640V662L725 631A11.5 11.5 0 0 1 725 608z" fill="#0c7f0c" stroke="#6fae7a" strokeWidth=".5" />
              <path d="M1258 125H1280V228L1258 226z" fill="#000" />
              {squares.map(([x, y]) => (
                <rect key={x} x={x - 7} y={y - 7} width="14" height="14" fill="none" stroke="#b7a61c" strokeWidth="1" />
              ))}
              <path d="M533 125V300" stroke="#b9c06a" strokeWidth="1" strokeDasharray="4 3" />
              <path d="M533 300V660" stroke="#c9c9c9" strokeWidth="1" strokeDasharray="4 3" />
              {ticks.map(([x, y]) => (
                <path key={x} d={`M${x} ${y}v20`} stroke="#7f8a5a" strokeWidth="1" />
              ))}
              {stations.map((s) => (
                <text key={s.t} x={s.x} y={s.y} transform={`rotate(-86.8 ${s.x} ${s.y})`} fontSize="22" textLength={s.len} lengthAdjust="spacingAndGlyphs" fill="#bcc4ca" fontFamily="Liberation Sans">{s.t}</text>
              ))}
              <path d="M397 456L1280 505" stroke="#d98a20" strokeWidth="1.6" />
              <path d="M498 367H512M505 360V374" stroke="#fff" strokeWidth="1.2" />
              <rect x="503" y="365" width="4" height="4" fill="none" stroke="#fff" strokeWidth=".6" />
              <path d="M430 638V622" stroke="#17d017" strokeWidth="2" />
              <path d="M426 624L430 617L434 624z" fill="#17d017" />
              <path d="M430 639H446" stroke="#e01414" strokeWidth="2" />
              <path d="M444 635L451 639L444 643z" fill="#e01414" />
              <circle cx="430" cy="639" r="3.2" fill="#1616d8" />
              <text x="427" y="618" fontSize="7" fill="#17d017" fontFamily="Liberation Sans">Y</text>
              <text x="451" y="642" fontSize="7" fill="#e01414" fontFamily="Liberation Sans">X</text>
            </CadSvg>
            <InfoCard>
              <InfoLine><InfoMark>i</InfoMark><span>按CTRL键手动调整误差值</span></InfoLine>
              <InfoLine><span>当前：</span><InfoHot>自动调整误差值识别</InfoHot></InfoLine>
            </InfoCard>
            <HintBar>
              <svg width="10" height="10" viewBox="0 0 16 16"><path d="M1 15l5-5M2 9h4v4M15 1l-5 5M14 7h-4V3" stroke="#fff" fill="none" strokeWidth="1.2" /></svg>
              <span>按鼠标左键指定插入点，按右键结束或ESC取消，按Ctrl键可以切换识别模式</span>
            </HintBar>
            <ViewTools>
              <Icon n="sphere" s={15} />
              <Icon n="cube" s={15} />
              <Caret />
              <Icon n="cubeF" s={15} />
              <Caret />
              <Icon n="clipV" s={15} />
              <Icon n="frame" s={15} />
              <ViewSep />
              <Icon n="doc" s={15} />
            </ViewTools>
          </Canvas>
        </Work>
      </Body>

      <StatusBar>
        <Coord>X = -207.441 Y = 346.551</Coord>
        <Selected>选中图元： 0</Selected>
        <StatusBtn><Icon n="axes" s={11} /></StatusBtn>
        <StatusBtn $w={23} $on><Icon n="boxI" s={11} /><Caret /></StatusBtn>
        <StatusBtn><Icon n="crossI" s={11} /></StatusBtn>
        <StatusBtn $w={23} $on><Icon n="dotI" s={11} /><Caret /></StatusBtn>
        <StatusBtn><Icon n="docI" s={11} /></StatusBtn>
        <StatusBtn><Icon n="curveI" s={11} /></StatusBtn>
        <StatusRight>
          <Bright>CAD图亮度：100%</Bright>
          <ZoomBtn><Icon n="minusI" s={10} /></ZoomBtn>
          <SliderTrack><SliderKnob /></SliderTrack>
          <ZoomBtn><Icon n="minusI" s={10} /></ZoomBtn>
          <Select $w={48} $on><span>原始图层</span><Caret /></Select>
          <Select $w={40}><span>1:1000</span><Caret /></Select>
          <Icon n="lock" s={11} />
        </StatusRight>
      </StatusBar>

      <Taskbar>
        <StartBtn><Icon n="win" s={14} /></StartBtn>
        <TaskSearch>
          <Icon n="mag" s={13} />
          <span>搜索</span>
          <Turtle viewBox="0 0 46 24">
            <ellipse cx="24" cy="12" rx="14" ry="8" fill="#9a5a2a" transform="rotate(12 24 12)" />
            <path d="M14 8l8 4 8-6M20 18l4-6 8 5" stroke="#d8a878" fill="none" />
            <ellipse cx="6" cy="6" rx="5" ry="3" fill="#a8a05a" />
            <path d="M12 16l-3 6 5-2zM34 16l6 5-7-1z" fill="#7d7a3a" />
          </Turtle>
        </TaskSearch>
        {taskApps.map(([node, run, on], i) => (
          <TaskItem key={i} $run={run} $on={on}>{node}</TaskItem>
        ))}
        <Tray>
          <TrayItem $w={16}>^</TrayItem>
          <TrayItem $w={16}>
            <svg width="7" height="12" viewBox="0 0 7 12"><rect x="1.5" width="4" height="8" rx="2" fill="#eee" /><path d="M0 6a3.5 3.5 0 0 0 7 0M3.5 10v2" stroke="#eee" fill="none" /></svg>
          </TrayItem>
          <TrayItem $w={16}>
            <svg width="11" height="7" viewBox="0 0 11 7"><path d="M2 7a2 2 0 0 1 0-4 3.5 3.5 0 0 1 6.5-1A2.5 2.5 0 0 1 9 7z" fill="#eee" /></svg>
          </TrayItem>
          <TrayItem $w={16}>
            <svg width="11" height="11" viewBox="0 0 11 11"><path d="M.5.5h9v9h-9z" stroke="#eee" fill="none" /><circle cx="8" cy="8" r="2.5" fill="#e8a020" /></svg>
          </TrayItem>
          <TrayItem $w={16}>
            <svg width="11" height="8" viewBox="0 0 11 8"><path d="M2 1h9v6H2zM0 0v4" stroke="#eee" fill="#eee" /></svg>
          </TrayItem>
          <TrayItem $w={16}>
            <svg width="10" height="10" viewBox="0 0 10 10"><path d="M1 9a8 8 0 0 1 8-8M3.5 9A5.5 5.5 0 0 1 9 3.5M6 9a3 3 0 0 1 3-3" stroke="#aaa" fill="none" /></svg>
          </TrayItem>
          <TrayItem $w={15}>
            <svg width="10" height="10" viewBox="0 0 10 10"><path d="M0 3.5h2L5 1v8L2 6.5H0z" fill="#eee" /><path d="M6.5 3a3 3 0 0 1 0 4M8 2a5 5 0 0 1 0 6" stroke="#eee" fill="none" /></svg>
          </TrayItem>
          <TrayItem $w={20}>英</TrayItem>
          <TrayItem $w={20}>囲</TrayItem>
          <Clock>
            <div>15:45</div>
            <div>2024/5/23</div>
          </Clock>
          <TrayItem $w={24}>
            <svg width="12" height="12" viewBox="0 0 12 12"><path d="M.5.5h11v8H7L6 11 5 8.5H.5z" stroke="#eee" fill="none" /></svg>
          </TrayItem>
        </Tray>
      </Taskbar>

      <ShareBar>
        <svg width="9" height="9" viewBox="0 0 9 9"><path d="M1 5h1.5v4H1zM4 3h1.5v6H4zM7 0h1.5v9H7z" fill="#2aa55a" /></svg>
        <ShareText>您正在共享屏幕</ShareText>
        <ShareTime>00:55:33</ShareTime>
        <svg width="12" height="7" viewBox="0 0 12 7"><path d="M1 1l5 5 5-5" stroke="#b8c4d4" strokeWidth="1.2" fill="none" /></svg>
      </ShareBar>
      <Bubble>
        <span>遇到问题，搜一搜</span>
        <BubbleCta>立即尝试</BubbleCta>
      </Bubble>
    </Root>
  );
}
